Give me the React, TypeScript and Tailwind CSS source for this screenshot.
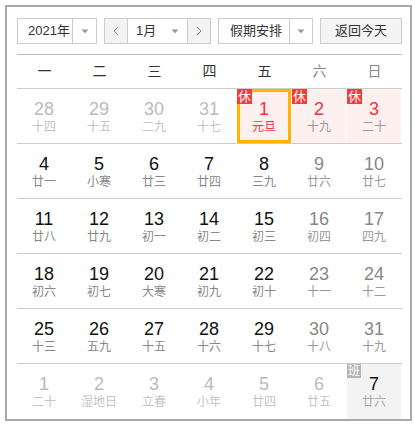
import React from "react";

type C = { d: number; l: string; o?: boolean; h?: boolean; sel?: boolean; w?: boolean; red?: boolean };

const rows: C[][] = [
  [
    { d: 28, l: "十四", o: true },
    { d: 29, l: "十五", o: true },
    { d: 30, l: "二九", o: true },
    { d: 31, l: "十七", o: true },
    { d: 1, l: "元旦", h: true, sel: true, red: true },
    { d: 2, l: "十九", h: true },
    { d: 3, l: "二十", h: true },
  ],
  [
    { d: 4, l: "廿一" },
    { d: 5, l: "小寒" },
    { d: 6, l: "廿三" },
    { d: 7, l: "廿四" },
    { d: 8, l: "三九" },
    { d: 9, l: "廿六" },
    { d: 10, l: "廿七" },
  ],
  [
    { d: 11, l: "廿八" },
    { d: 12, l: "廿九" },
    { d: 13, l: "初一" },
    { d: 14, l: "初二" },
    { d: 15, l: "初三" },
    { d: 16, l: "初四" },
    { d: 17, l: "四九" },
  ],
  [
    { d: 18, l: "初六" },
    { d: 19, l: "初七" },
    { d: 20, l: "大寒" },
    { d: 21, l: "初九" },
    { d: 22, l: "初十" },
    { d: 23, l: "十一" },
    { d: 24, l: "十二" },
  ],
  [
    { d: 25, l: "十三" },
    { d: 26, l: "五九" },
    { d: 27, l: "十五" },
    { d: 28, l: "十六" },
    { d: 29, l: "十七" },
    { d: 30, l: "十八" },
    { d: 31, l: "十九" },
  ],
  [
    { d: 1, l: "二十", o: true },
    { d: 2, l: "湿地日", o: true },
    { d: 3, l: "立春", o: true },
    { d: 4, l: "小年", o: true },
    { d: 5, l: "廿四", o: true },
    { d: 6, l: "廿五", o: true },
    { d: 7, l: "廿六", w: true },
  ],
];

const weekdays = ["一", "二", "三", "四", "五", "六", "日"];

function Caret() {
  return (
    <svg width="8" height="5" viewBox="0 0 8 5">
      <path d="M0.5 0.5 L7.5 0.5 L4 4.2 Z" fill="#999" />
    </svg>
  );
}

function Chevron({ dir }: { dir: "l" | "r" }) {
  return (
    <svg width="6" height="10" viewBox="0 0 6 10">
      <polyline
        points={dir === "l" ? "5,1 1,5 5,9" : "1,1 5,5 1,9"}
        fill="none"
        stroke="#888"
        strokeWidth="1"
      />
    </svg>
  );
}

function Cell({ c, col }: { c: C; col: number }) {
  const weekend = col >= 5;
  let num = "text-[#111]";
  let lun = "text-[#888]";
  if (c.o) {
    num = "text-[#bbb]";
    lun = "text-[#c4c4c4]";
  } else if (c.h) {
    num = "text-[#f0323c]";
    lun = c.red ? "text-[#f0323c]" : "text-[#999]";
  } else if (c.w) {
    num = "text-[#111]";
    lun = "text-[#aaa]";
  } else if (weekend) {
    num = "text-[#888]";
    lun = "text-[#999]";
  }
  const bg = c.h ? "bg-[#fff0f0]" : c.w ? "bg-[#f3f3f3]" : "";
  return (
    <div className={`relative mr-px flex h-full flex-col items-center pt-[10px] ${bg}`}>
      <div className={`text-[18px] leading-[20px] ${num}`}>{c.d}</div>
      <div className={`text-[12px] leading-[16px] ${lun}`}>{c.l}</div>
      {c.sel && <div className="absolute inset-0 border-[3px] border-[#ffb400]" />}
      {c.h && (
        <div className="absolute left-0 top-0 h-[15px] w-[15px] bg-[#f43a3a] text-center text-[13px] leading-[15px] text-white">
          休
        </div>
      )}
      {c.w && (
        <div className="absolute left-0 top-0 h-[14px] w-[14px] bg-[#b5b5b5] text-center text-[12px] leading-[14px] text-white">
          班
        </div>
      )}
    </div>
  );
}

export default function App() {
  return (
    <div className="h-[424px] w-[415px] bg-white p-[5px] font-['Liberation_Sans','Noto_Sans_CJK_SC',sans-serif]">
      <div className="h-[416px] w-[407px] border-2 border-[#a9a9a9] pl-[10px] pr-[8px] pt-[11px]">
        <div className="flex h-[26px] gap-[7px] text-[13px] text-[#333]">
          <div className="flex w-[80px] border border-[#ccc] bg-white">
            <div className="flex w-[54px] items-center pl-[10px]">2021年</div>
            <div className="flex flex-1 items-center justify-center border-l border-[#ccc]">
              <Caret />
            </div>
          </div>
          <div className="flex w-[107px] border border-[#ccc] bg-white">
            <div className="flex w-[22px] items-center justify-center bg-[#f3f3f3]">
              <Chevron dir="l" />
            </div>
            <div className="flex flex-1 items-center justify-between border-x border-[#ccc] pl-[8px] pr-[8px]">
              <span>1月</span>
              <Caret />
            </div>
            <div className="flex w-[22px] items-center justify-center bg-[#f3f3f3]">
              <Chevron dir="r" />
            </div>
          </div>
          <div className="flex w-[95px] border border-[#ccc] bg-white">
            <div className="flex w-[70px] items-center pl-[11px]">假期安排</div>
            <div className="flex flex-1 items-center justify-center border-l border-[#ccc]">
              <Caret />
            </div>
          </div>
          <div className="flex w-[82px] items-center justify-center border border-[#ccc] bg-[#f4f4f4]">
            返回今天
          </div>
        </div>
        <div className="mt-[10px] h-px bg-[#bbb]" />
        <div className="grid h-[34px] grid-cols-7 items-center border-b border-[#ccc] text-[14px]">
          {weekdays.map((w, i) => (
            <div key={w} className={`text-center ${i >= 5 ? "text-[#888]" : "text-[#333]"}`}>
              {w}
            </div>
          ))}
        </div>
        {rows.map((r, ri) => (
          <div
            key={ri}
            className={`grid h-[55px] grid-cols-7 ${ri < rows.length - 1 ? "border-b border-[#ccc]" : ""}`}
          >
            {r.map((c, ci) => (
              <Cell key={ci} c={c} col={ci} />
            ))}
          </div>
        ))}
      </div>
    </div>
  );
}
